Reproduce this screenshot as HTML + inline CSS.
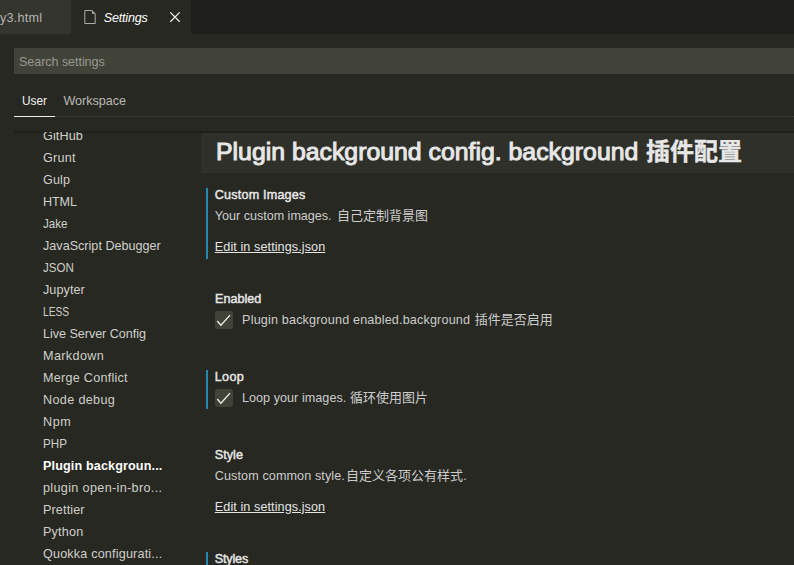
<!DOCTYPE html>
<html><head><meta charset="utf-8">
<style>
html,body{margin:0;padding:0;}
body{width:794px;height:565px;overflow:hidden;background:#272822;position:relative;font-family:"Liberation Sans","Noto Sans CJK SC",sans-serif;font-size:12.6px;color:#cccccc;}
.abs{position:absolute;white-space:nowrap;}
.t{position:absolute;white-space:nowrap;line-height:20px;height:20px;}
.toc{color:#cfcfca;}
#tabbar{left:0;top:0;width:794px;height:34px;background:#1e1f1c;}
#tab1{left:0;top:0;width:71px;height:34px;background:#34352f;}
#tab2{left:71px;top:0;width:120px;height:35px;background:#272822;}
#search{left:14px;top:48px;width:780px;height:26px;background:#414339;}
#hline{left:55px;top:116px;width:739px;height:1px;background:repeating-linear-gradient(90deg,#43443e 0,#43443e 1px,#292a24 1px,#292a24 2px);}
#uline{left:14px;top:116px;width:41px;height:1px;background:#ececec;}
#tocbox{left:0;top:132px;width:200px;height:433px;overflow:hidden;}
#shadow{left:14px;top:131px;width:780px;height:3px;background:linear-gradient(#20211c,#20211c 40%,#262721);}
#hdr{left:201px;top:133px;width:593px;height:40px;background:#2f302a;}
.bar{left:206px;width:2px;background:#2289b6;}
.cb{left:215px;width:18px;height:18px;background:#414339;border-radius:3px;}
</style></head><body>
<div class="abs" id="tabbar"></div>
<div class="abs" id="tab1"></div>
<div class="abs" id="tab2"></div>
<svg class="abs" style="left:83px;top:9px" width="14" height="16" viewBox="0 0 14 16"><path d="M9 1.500l3.200 3.200h-3.200z" fill="#b8b8b2" stroke="none"/><path d="M1.800 1.500h7.200l3.200 3.200v9.800h-10.400z" fill="none" stroke="#adada8" stroke-width="1"/></svg>
<svg class="abs" style="left:169px;top:12px" width="12" height="12" viewBox="0 0 12 12"><path d="M1.300 0.400l9.400 9.300M10.700 0.400l-9.400 9.300" stroke="#ececec" stroke-width="1.300" fill="none"/></svg>
<div class="abs" id="search"></div>
<div class="t" id="x0" style="left:0.00px;top:8.13px;letter-spacing:0.258px;color:#b4b4af;">y3.html</div>
<div class="t" id="x1" style="left:103.70px;top:8.13px;letter-spacing:-0.202px;color:#ffffff;font-style:italic;">Settings</div>
<div class="t" id="x2" style="left:19.00px;top:51.63px;letter-spacing:-0.074px;color:#979891;">Search settings</div>
<div class="t" id="x3" style="left:21.90px;top:90.63px;transform:scaleX(0.9401);transform-origin:0 0;color:#f2f2f2;">User</div>
<div class="t" id="x4" style="left:63.40px;top:90.63px;letter-spacing:-0.030px;color:#babab2;">Workspace</div>
<div class="abs" id="hline"></div>
<div class="abs" id="uline"></div>
<div class="abs" id="shadow"></div>
<div class="abs" id="tocbox">
<div class="t toc" id="x5" style="left:43.00px;top:-6.37px;letter-spacing:0.133px;">GitHub</div>
<div class="t toc" id="x6" style="left:43.00px;top:15.63px;letter-spacing:0.220px;">Grunt</div>
<div class="t toc" id="x7" style="left:43.00px;top:37.63px;letter-spacing:0.123px;">Gulp</div>
<div class="t toc" id="x8" style="left:43.00px;top:59.63px;letter-spacing:-0.124px;">HTML</div>
<div class="t toc" id="x9" style="left:43.00px;top:81.63px;transform:scaleX(0.9245);transform-origin:0 0;">Jake</div>
<div class="t toc" id="x10" style="left:43.00px;top:103.63px;letter-spacing:0.010px;">JavaScript Debugger</div>
<div class="t toc" id="x11" style="left:43.00px;top:125.63px;transform:scaleX(0.9168);transform-origin:0 0;">JSON</div>
<div class="t toc" id="x12" style="left:43.00px;top:147.63px;letter-spacing:0.070px;">Jupyter</div>
<div class="t toc" id="x13" style="left:43.00px;top:169.63px;transform:scaleX(0.8101);transform-origin:0 0;">LESS</div>
<div class="t toc" id="x14" style="left:43.00px;top:191.63px;letter-spacing:-0.039px;">Live Server Config</div>
<div class="t toc" id="x15" style="left:43.00px;top:213.63px;letter-spacing:0.388px;">Markdown</div>
<div class="t toc" id="x16" style="left:43.00px;top:235.63px;letter-spacing:0.264px;">Merge Conflict</div>
<div class="t toc" id="x17" style="left:43.00px;top:257.63px;letter-spacing:0.356px;">Node debug</div>
<div class="t toc" id="x18" style="left:43.00px;top:279.63px;letter-spacing:0.569px;">Npm</div>
<div class="t toc" id="x19" style="left:43.00px;top:301.63px;transform:scaleX(0.9226);transform-origin:0 0;">PHP</div>
<div class="t toc" id="x20" style="left:43.00px;top:323.63px;letter-spacing:0.134px;color:#ffffff;font-weight:bold;">Plugin backgroun...</div>
<div class="t toc" id="x21" style="left:43.00px;top:345.63px;letter-spacing:0.352px;">plugin open-in-bro...</div>
<div class="t toc" id="x22" style="left:43.00px;top:367.63px;letter-spacing:0.138px;">Prettier</div>
<div class="t toc" id="x23" style="left:43.00px;top:389.63px;letter-spacing:0.197px;">Python</div>
<div class="t toc" id="x24" style="left:43.00px;top:411.63px;letter-spacing:0.185px;">Quokka configurati...</div>
</div>
<div class="abs" id="hdr"></div>
<div class="abs bar" style="top:188px;height:71px"></div>
<div class="abs bar" style="top:370px;height:39px"></div>
<div class="abs bar" style="top:552px;height:20px"></div>
<div class="abs cb" style="top:311px"></div><svg class="abs" style="left:215px;top:311px" width="18" height="18" viewBox="0 0 18 18"><path d="M2.300 10l3.600 4.200l9.100-10" stroke="#f4f4f4" stroke-width="1.250" fill="none"/></svg>
<div class="abs cb" style="top:389px"></div><svg class="abs" style="left:215px;top:389px" width="18" height="18" viewBox="0 0 18 18"><path d="M2.300 10l3.600 4.200l9.100-10" stroke="#f4f4f4" stroke-width="1.250" fill="none"/></svg>
<div class="t" id="x25" style="left:216.00px;top:135.63px;font-size:23px;line-height:32px;height:32px;transform:scaleX(1.0793);transform-origin:0 0;color:#e7e7e7;-webkit-text-stroke:0.95px #e7e7e7;">Plugin background config. background</div>
<div class="t" id="x26" style="left:646.00px;top:136.08px;font-size:24px;line-height:32px;height:32px;color:#e7e7e7;font-weight:bold;-webkit-text-stroke:0.4px #e7e7e7;">插件配置</div>
<div class="t" id="x27" style="left:214.80px;top:184.63px;letter-spacing:0.193px;color:#e7e7e7;-webkit-text-stroke:0.45px #e7e7e7;">Custom Images</div>
<div class="t" id="x28" style="left:214.80px;top:205.63px;letter-spacing:-0.018px;color:#cccccc;">Your custom images.</div>
<div class="t" id="x29" style="left:336.94px;top:205.50px;font-size:13px;color:#cccccc;">自己定制背景图</div>
<div class="t" id="x30" style="left:214.80px;top:236.63px;letter-spacing:0.094px;color:#e4e4e4;text-decoration:underline;">Edit in settings.json</div>
<div class="t" id="x31" style="left:215.00px;top:288.63px;color:#e7e7e7;-webkit-text-stroke:0.45px #e7e7e7;">Enabled</div>
<div class="t" id="x32" style="left:242.10px;top:309.63px;letter-spacing:0.170px;color:#cccccc;">Plugin background enabled.background</div>
<div class="t" id="x33" style="left:474.74px;top:309.50px;font-size:13px;color:#cccccc;">插件是否启用</div>
<div class="t" id="x34" style="left:214.80px;top:366.63px;letter-spacing:0.317px;color:#e7e7e7;-webkit-text-stroke:0.45px #e7e7e7;">Loop</div>
<div class="t" id="x35" style="left:241.90px;top:387.63px;letter-spacing:0.051px;color:#cccccc;">Loop your images.</div>
<div class="t" id="x36" style="left:349.89px;top:387.50px;font-size:13px;color:#cccccc;">循环使用图片</div>
<div class="t" id="x37" style="left:214.80px;top:444.63px;letter-spacing:0.040px;color:#e7e7e7;-webkit-text-stroke:0.45px #e7e7e7;">Style</div>
<div class="t" id="x38" style="left:214.80px;top:465.63px;letter-spacing:0.101px;color:#cccccc;">Custom common style.</div>
<div class="t" id="x39" style="left:345.99px;top:465.50px;font-size:13px;color:#cccccc;">自定义各项公有样式</div>
<div class="t" id="x40" style="left:463.20px;top:465.63px;color:#cccccc;">.</div>
<div class="t" id="x41" style="left:214.80px;top:496.63px;letter-spacing:0.090px;color:#e4e4e4;text-decoration:underline;">Edit in settings.json</div>
<div class="t" id="x42" style="left:214.80px;top:548.63px;letter-spacing:-0.183px;color:#e7e7e7;-webkit-text-stroke:0.45px #e7e7e7;">Styles</div>
</body></html>
